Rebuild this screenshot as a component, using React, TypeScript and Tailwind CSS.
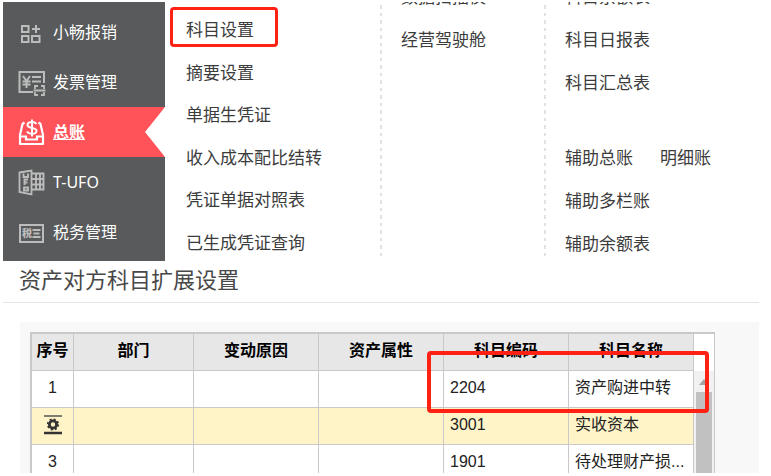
import type { ReactNode } from "react";

const sans = "font-['Noto_Sans_CJK_SC',sans-serif]";

function IconFrame({ children }: { children: ReactNode }) {
  return (
    <svg
      width="28"
      height="28"
      viewBox="0 0 28 28"
      fill="none"
      stroke="currentColor"
      strokeWidth="2"
      className="shrink-0"
      aria-hidden="true"
    >
      {children}
    </svg>
  );
}

function ExpenseIcon() {
  return (
    <IconFrame>
      <rect x="4" y="8" width="6.500" height="6" />
      <rect x="4" y="18" width="6.500" height="6" />
      <rect x="14" y="18" width="7.500" height="6" />
      <path d="M18 7v8M14 11h8" />
    </IconFrame>
  );
}

function InvoiceIcon() {
  return (
    <IconFrame>
      <path d="M15 24H1.500V4H26v11" strokeWidth="2" />
      <path d="M5 8l3.500 5L12 8M8.500 13v7M4.500 13.500h8M4.500 16.500h8" strokeWidth="1.900" />
      <path d="M14 9h9M14 13.500h9" strokeWidth="1.900" />
      <path d="M17 21v-3h3M23 18h3v3M26 24v3h-3M20 27h-3v-3M15.500 22.500h12" strokeWidth="1.800" />
    </IconFrame>
  );
}

function LedgerIcon() {
  return (
    <IconFrame>
      <path d="M6.500 4.500L4.500 6L2 17v9h23v-9L22.500 6l-2-1.500" strokeWidth="2.200" strokeLinejoin="round" />
      <path d="M2 18.500h6v3h11v-3h6" strokeWidth="2.200" />
      <path
        d="M18.500 6c-1-1.500-2.500-2-4.500-2-3 0-4.500 1.200-4.500 3 0 4 9 2 9 5.800 0 2-2 3-4.500 3-2.300 0-4-.8-5-2.300M14 1.500v17"
        strokeWidth="2"
      />
    </IconFrame>
  );
}

function UfoIcon() {
  return (
    <IconFrame>
      <path d="M1.500 4.500L13.500 2.500v24L1.500 24z" strokeWidth="1.800" />
      <path d="M5.500 5.500v3.500h4.500V5.500M6.500 17v-5.500h3.500M6.500 14.500h3M6 19.500h4v3H6z" strokeWidth="1.900" />
      <path d="M14 5.500h11.500v16H14M14 11h11.500M14 16.500h11.500M18 5.500v16M22 5.500v16" strokeWidth="1.900" />
    </IconFrame>
  );
}

function TaxIcon() {
  return (
    <IconFrame>
      <rect x="2" y="7" width="23" height="17" />
      <text
        x="4"
        y="19"
        fontSize="10"
        fontWeight="900"
        fill="currentColor"
        stroke="none"
        className={sans}
      >
        税
      </text>
      <path d="M14.500 12h8M15.500 15.500h6M14.500 19h8" strokeWidth="1.800" />
    </IconFrame>
  );
}

const modules = [
  { label: "小畅报销", icon: <ExpenseIcon />, active: false },
  { label: "发票管理", icon: <InvoiceIcon />, active: false },
  { label: "总账", icon: <LedgerIcon />, active: true },
  { label: "T-UFO", icon: <UfoIcon />, active: false },
  { label: "税务管理", icon: <TaxIcon />, active: false },
];

function Sidebar() {
  return (
    <nav className="w-[162px] shrink-0 bg-[#585a5b] pt-[5px] font-['Noto_Sans','Noto_Sans_CJK_SC',sans-serif] text-base">
      {modules.map((m) => (
        <a
          key={m.label}
          href="#"
          className={
            m.active
              ? "relative flex h-[50px] items-center gap-[7px] bg-[#ff5259] pl-[15px] font-bold text-white underline"
              : "flex h-[50px] items-center gap-[7px] pl-[15px] text-white"
          }
        >
          <span className={m.active ? "text-white" : "text-[#bcbcbc]"}>{m.icon}</span>
          <span className="leading-6">{m.label}</span>
          {m.active && (
            <svg
              width="20"
              height="50"
              viewBox="0 0 20 50"
              className="absolute top-0 right-0"
              aria-hidden="true"
            >
              <path d="M20 0L0 25L20 50z" fill="#fff" />
            </svg>
          )}
        </a>
      ))}
    </nav>
  );
}

function MenuLink({ label, marked }: { label: string; marked?: boolean }) {
  return (
    <div className="flex items-center">
      <a href="#" className={marked ? "relative" : ""}>
        {label}
        {marked && (
          <span className="absolute -top-3 -right-6 -bottom-1 -left-4 rounded-[4px] border-3 border-[#ff2114]" />
        )}
      </a>
    </div>
  );
}

function Divider() {
  return (
    <div className="my-[3px] w-[2px] shrink-0 bg-[repeating-linear-gradient(#e2e2e2_0_4px,transparent_4px_8px,#e2e2e2_8px_11px,transparent_11px_15px)]" />
  );
}

function MegaMenu() {
  return (
    <div className="flex h-[259px] overflow-hidden">
      <Sidebar />
      <div className="flex min-w-0 flex-1 text-[17px] leading-6 text-[#3c3c3c]">
        <div className="w-[215px] shrink-0 pt-[8px] pl-[21px]">
          <div className="grid h-[255px] grid-rows-6">
            <MenuLink label="科目设置" marked />
            <MenuLink label="摘要设置" />
            <MenuLink label="单据生凭证" />
            <MenuLink label="收入成本配比结转" />
            <MenuLink label="凭证单据对照表" />
            <MenuLink label="已生成凭证查询" />
          </div>
        </div>
        <Divider />
        <div className="w-[162px] shrink-0 pl-[19px]">
          <div className="-mt-[25px] grid h-[85px] grid-rows-2">
            <MenuLink label="数据扫描仪" />
            <MenuLink label="经营驾驶舱" />
          </div>
        </div>
        <Divider />
        <div className="min-w-0 flex-1 pl-[19px]">
          <div className="-mt-[25px] grid h-[128px] grid-rows-3">
            <MenuLink label="科目余额表" />
            <MenuLink label="科目日报表" />
            <MenuLink label="科目汇总表" />
          </div>
          <div className="mt-[33px] grid h-[128px] grid-rows-3">
            <div className="flex gap-[27px]">
              <MenuLink label="辅助总账" />
              <MenuLink label="明细账" />
            </div>
            <MenuLink label="辅助多栏账" />
            <MenuLink label="辅助余额表" />
          </div>
        </div>
      </div>
    </div>
  );
}

function RowMenuIcon() {
  return (
    <svg width="18" height="20" viewBox="0 0 18 20" className="mx-auto" role="img" aria-label="行设置">
      <path d="M0 1h18" stroke="#555" strokeWidth="1.500" />
      <path d="M0 18h18" stroke="#333" strokeWidth="2.500" />
      <circle cx="9" cy="9.500" r="3.600" fill="none" stroke="#333" strokeWidth="2.800" />
      <circle cx="9" cy="9.500" r="5.300" fill="none" stroke="#333" strokeWidth="1.600" strokeDasharray="2.080 2.080" />
    </svg>
  );
}

const headers = ["序号", "部门", "变动原因", "资产属性", "科目编码", "科目名称"];
const rows = [
  { no: "1", code: "2204", name: "资产购进中转", selected: false },
  { no: "2", code: "3001", name: "实收资本", selected: true },
  { no: "3", code: "1901", name: "待处理财产损...", selected: false },
];

function AccountGrid() {
  return (
    <div className="relative mr-[44px] flex border-t-2 border-r border-l-2 border-[#c9c9c9]">
      <table className="min-w-0 flex-1 table-fixed border-separate border-spacing-0 text-base leading-6 text-[#222]">
        <colgroup>
          <col className="w-[42px]" />
          <col className="w-[120px]" />
          <col className="w-[125px]" />
          <col className="w-[125px]" />
          <col className="w-[125px]" />
          <col className="w-[125px]" />
        </colgroup>
        <thead>
          <tr className="h-[37px] bg-[#e7e7e7] text-black">
            {headers.map((h) => (
              <th key={h} className="border-r border-b border-[#c9c9c9] p-0 pb-[2px] font-bold">
                {h}
              </th>
            ))}
          </tr>
        </thead>
        <tbody>
          {rows.map((r) => (
            <tr key={r.no} className={r.selected ? "h-[37px] bg-[#fef4c8]" : "h-[37px] bg-white"}>
              <td className="border-r border-b border-[#c9c9c9] p-0 pb-[2px] text-center">
                {r.selected ? <RowMenuIcon /> : r.no}
              </td>
              <td className="border-r border-b border-[#c9c9c9] p-0" />
              <td className="border-r border-b border-[#c9c9c9] p-0" />
              <td className="border-r border-b border-[#c9c9c9] p-0" />
              <td className="border-r border-b border-[#c9c9c9] p-0 pb-[2px] pl-[6px]">{r.code}</td>
              <td className="border-r border-b border-[#c9c9c9] p-0 pb-[2px] pl-[6px] whitespace-nowrap">{r.name}</td>
            </tr>
          ))}
        </tbody>
      </table>
      <div className="flex w-[20px] shrink-0 flex-col bg-[#f1f1f1]">
        <div className="h-[37px] bg-white" />
        <div className="flex h-[21px] items-center justify-center">
          <svg width="10" height="6" viewBox="0 0 10 6" aria-hidden="true">
            <path d="M0 6L5 0L10 6z" fill="#a3a3a3" />
          </svg>
        </div>
        <div className="ml-[2px] w-[16px] flex-1 bg-[#c1c1c1]" />
      </div>
      <div className="absolute top-[17px] right-[5px] h-[62px] w-[282px] rounded-[4px] border-4 border-[#ff2114]" />
    </div>
  );
}

export default function App() {
  return (
    <main className="bg-white pt-[2px] pr-3 pb-[3px] pl-[3px] font-['Liberation_Sans','Noto_Sans_CJK_SC',sans-serif]">
      <MegaMenu />
      <section>
        <h1 className="border-b border-[#e4e4e4] pt-1 pb-[5px] pl-4 text-[22px] leading-8 text-[#484848]">
          资产对方科目扩展设置
        </h1>
        <div className="mt-[19px] ml-[17px] h-[151px] overflow-hidden bg-[#f8f8f8] pt-[10px] pl-[10px]">
          <AccountGrid />
        </div>
      </section>
    </main>
  );
}
